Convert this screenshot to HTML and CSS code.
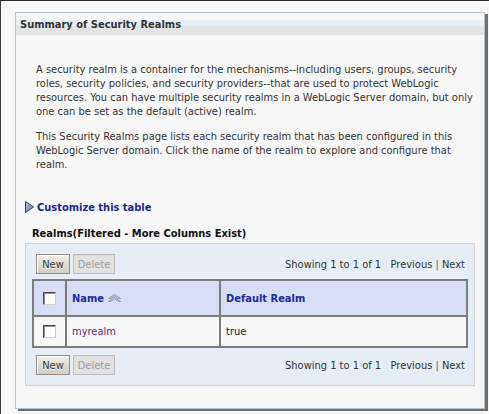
FILE: index.html
```html
<!DOCTYPE html>
<html>
<head>
<meta charset="utf-8">
<title>Summary of Security Realms</title>
<link rel="stylesheet" href="styles.css">
</head>
<body>
<div class="panel">
  <div class="panel-head"><h1>Summary of Security Realms</h1></div>
  <div class="panel-body">
    <p class="intro">A security realm is a container for the mechanisms--including users, groups, security<br>roles, security policies, and security providers--that are used to protect WebLogic<br>resources. You can have multiple security realms in a WebLogic Server domain, but only<br>one can be set as the default (active) realm.</p>
    <p class="intro">This Security Realms page lists each security realm that has been configured in this<br>WebLogic Server domain. Click the name of the realm to explore and configure that<br>realm.</p>
    <a class="customize" href="#"><svg class="tri" width="9" height="12" viewBox="0 0 9 12"><defs><linearGradient id="tg" x1="0" y1="0" x2="1" y2="1"><stop offset="0" stop-color="#b9c9e4"/><stop offset="1" stop-color="#5b73a6"/></linearGradient></defs><polygon points="0.5,0.5 8.5,6 0.5,11.5" fill="url(#tg)" stroke="#2d3f6f" stroke-width="1"/></svg>Customize this table</a>
    <div class="table-title">Realms(Filtered - More Columns Exist)</div>
    <div class="table-box">
      <div class="controls">
        <div class="buttons"><button class="btn new">New</button><button class="btn del" disabled>Delete</button></div>
        <div class="pager">Showing 1 to 1 of 1&nbsp;&nbsp; <a href="#">Previous</a> <span class="sep">|</span> <a href="#">Next</a></div>
      </div>
      <table class="grid">
        <tr class="head">
          <th class="chk"><input type="checkbox" class="cb"></th>
          <th class="name">Name <svg class="sort" width="13" height="8" viewBox="0 0 13 8"><path d="M0.5,4.5 L6.5,0.5 L12.5,4.5 L10.5,4.5 L6.5,2 L2.5,4.5 Z" fill="#e8edf8" stroke="#7a86a0" stroke-width="0.8"/><path d="M0.5,7.5 L6.5,3.5 L12.5,7.5 L10.5,7.5 L6.5,5 L2.5,7.5 Z" fill="#e8edf8" stroke="#7a86a0" stroke-width="0.8"/></svg></th>
          <th class="def">Default Realm</th>
        </tr>
        <tr class="row">
          <td class="chk"><input type="checkbox" class="cb"></td>
          <td><a class="realm" href="#">myrealm</a></td>
          <td>true</td>
        </tr>
      </table>
      <div class="controls bottom">
        <div class="buttons"><button class="btn new">New</button><button class="btn del" disabled>Delete</button></div>
        <div class="pager">Showing 1 to 1 of 1&nbsp;&nbsp; <a href="#">Previous</a> <span class="sep">|</span> <a href="#">Next</a></div>
      </div>
    </div>
  </div>
</div>
</body>
</html>
```

FILE: styles.css
```css
html, body {
  margin: 0;
  padding: 0;
}
body {
  background: #f7f7f7;
  border-top: 1px solid #2a2a2a;
  border-left: 1px solid #3a3a3a;
  height: 413px;
  overflow: hidden;
  font-family: "DejaVu Sans Condensed", "Liberation Sans", sans-serif;
  font-size: 11px;
  color: #333;
}
.panel {
  margin: 11px 0 0 14px;
  width: 468px;
  height: 395px;
  border: 1px solid #b5c2cc;
  background: #f7f7f7;
  box-shadow: 3px 2px 0 #6e6e6e;
}
.panel-head {
  height: 22px;
  background: linear-gradient(to bottom, #f7f7f7 0, #f7f7f7 7px, #e6eef6 7px, #e6eef6 13px, #e4e4e4 13px, #e4e4e4 22px);
}
.panel-head h1 {
  margin: 0;
  padding: 5px 0 0 4px;
  font-size: 11px;
  line-height: 14px;
  font-weight: bold;
  color: #333;
}
.panel-body {
  padding: 28px 0 0 9px;
}
.intro {
  margin: 0 0 11px 11px;
  line-height: 14px;
  color: #333;
}
.customize {
  display: flex;
  align-items: center;
  gap: 3px;
  margin-top: 28px;
  height: 14px;
  font-size: 11px;
  font-weight: bold;
  color: #1b2a86;
  text-decoration: none;
}
.tri {
  display: block;
}
.table-title {
  margin: 13px 0 2px 7px;
  font-size: 11px;
  line-height: 14px;
  font-weight: bold;
  color: #111;
}
.table-box {
  width: 436px;
  padding: 10px 6px;
  background: #e7edf5;
  border: 1px solid #ccd3da;
}
.controls {
  display: flex;
  justify-content: space-between;
  align-items: center;
  padding: 0 3px 0 4px;
  height: 20px;
}
.controls.bottom {
  margin-top: 7px;
}
.buttons {
  display: flex;
  gap: 3px;
}
.btn {
  height: 20px;
  padding: 0;
  font-family: "DejaVu Sans Condensed", "Liberation Sans", sans-serif;
  font-size: 11px;
  color: #333;
  background: linear-gradient(to bottom, #f2f0ea 0, #dedbd2 50%, #d3cfc5 100%);
  border: 1px solid #8e8e8e;
  box-shadow: inset 1px 1px 0 #fff;
  border-radius: 0;
  text-shadow: 0 1px 0 #fff;
}
.btn.new {
  width: 34px;
}
.btn.del {
  width: 42px;
}
.btn[disabled] {
  color: #9e9e9e;
  background: #e1e1e1;
  border-color: #bdbdbd;
  box-shadow: none;
  text-shadow: none;
}
.pager {
  color: #333;
}
.pager a {
  color: #333;
  text-decoration: none;
}
.pager .sep {
  color: #666;
}
.grid {
  margin-top: 5px;
  width: 436px;
  border-collapse: collapse;
  border: 2px solid #7d7d7d;
}
.grid th, .grid td {
  border: 2px solid #7d7d7d;
  padding: 0 5px;
  text-align: left;
}
.grid .head th {
  height: 34px;
  background: #d6ddf5;
  font-size: 11px;
  font-weight: bold;
  color: #1f2c96;
}
.grid .row td {
  height: 29px;
  background: #f7f7f7;
  color: #222;
}
.grid .chk {
  width: 21px;
  text-align: center;
  padding: 0 5px;
}
.grid th.name {
  width: 142px;
}
.sort {
  vertical-align: 0;
  margin-left: 1px;
}
.cb {
  -webkit-appearance: none;
  appearance: none;
  display: block;
  margin: 0 auto;
  width: 13px;
  height: 13px;
  background: #fff;
  border: 1px solid;
  border-color: #4a4a4a #d4d0c8 #d4d0c8 #4a4a4a;
  box-shadow: inset 1px 1px 0 #909090;
}
.realm {
  color: #5a2a6e;
  text-decoration: none;
}
```
